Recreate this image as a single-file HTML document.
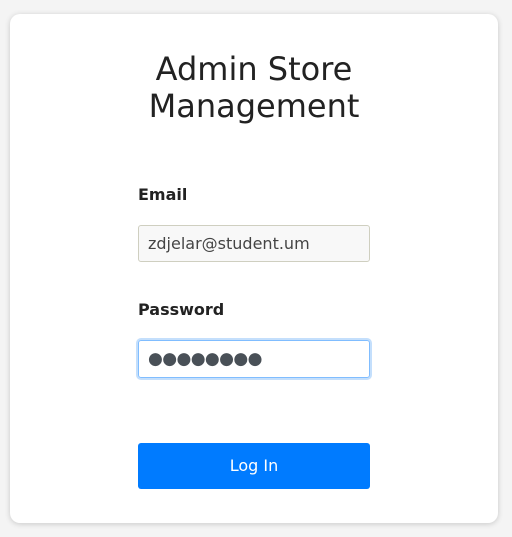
<!DOCTYPE html>
<html><head><style>
body{margin:0;background:#f4f4f4;width:512px;height:537px;font-family:"DejaVu Sans","Liberation Sans",sans-serif;}
.card{position:absolute;left:10px;top:14px;width:488px;height:509px;background:#fff;border-radius:10px;box-shadow:0 1px 6px rgba(0,0,0,.18);}
h1{position:absolute;left:0;width:100%;top:37px;margin:0;text-align:center;font-weight:normal;font-size:32px;line-height:37px;color:#222;}
.lbl{position:absolute;left:128px;font-weight:bold;font-size:16px;color:#222;}
.in{position:absolute;left:128px;height:35px;border:1px solid #ccc;border-radius:3px;box-sizing:content-box;font-size:16px;color:#444;line-height:35px;padding-left:9px;width:221px;}
.btn{position:absolute;left:128px;top:429px;width:232px;height:46px;background:#007bff;border-radius:3px;color:#fff;text-align:center;line-height:46px;font-size:16px;}
</style></head><body>
<div class="card">
<h1>Admin Store<br>Management</h1>
<div class="lbl" style="top:171px">Email</div>
<div class="in" style="top:211px;background:#f8f8f8;border-color:#cfcfc0">zdjelar@student.um</div>
<div class="lbl" style="top:286px">Password</div>
<div class="in" style="top:326px;height:36px;line-height:37px;border-color:#80bdff;box-shadow:0 0 0 2px #c4dffc;color:#495057;font-size:17px;letter-spacing:-0.6px">●●●●●●●●</div>
<div class="btn">Log In</div>
</div>
</body></html>
